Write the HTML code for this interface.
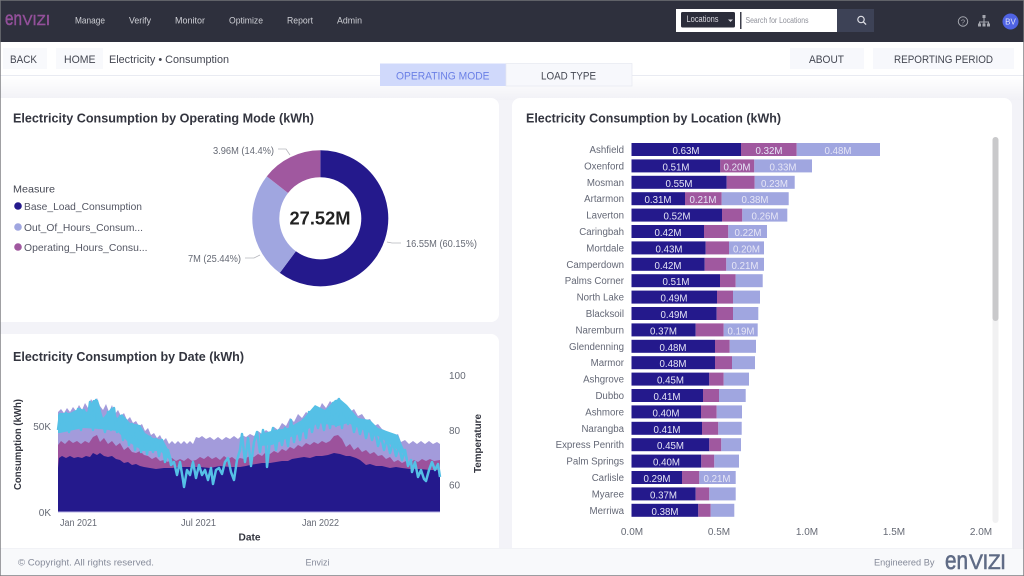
<!DOCTYPE html>
<html><head><meta charset="utf-8"><title>Envizi</title>
<style>
html,body{margin:0;padding:0;width:1024px;height:576px;overflow:hidden;background:#fff}
svg{display:block;filter:blur(.35px)}
text{font-family:"Liberation Sans",sans-serif;white-space:pre}
.nav{fill:#cfd0d6;font-size:9.5px}
.title{fill:#33353f;font-size:12.5px;font-weight:bold}
.loc{fill:#646876;font-size:9.7px;text-anchor:end}
.v{fill:#e6e6f6;font-size:9.7px;text-anchor:middle}
.ax{fill:#666a75;font-size:10px}
.btn{fill:#444752;font-size:11px}
</style></head><body>
<svg width="1024" height="576" viewBox="0 0 1024 576" xmlns="http://www.w3.org/2000/svg">
<defs><linearGradient id="g" x1="0" y1="0" x2="0" y2="1"><stop offset="0" stop-color="#fff"/><stop offset="1" stop-color="#f1f1f6"/></linearGradient></defs>
<rect width="1024" height="576" fill="#f3f3f8"/>
<rect y="76" width="1024" height="24" fill="url(#g)"/>

<!-- header -->
<rect width="1024" height="42" fill="#2e303d"/>
<text x="5" y="25" font-size="19" fill="#93509a" stroke="#93509a" stroke-width=".5" textLength="17" lengthAdjust="spacingAndGlyphs">en</text>
<text x="22.500" y="25" font-size="15" fill="#93509a" stroke="#93509a" stroke-width=".4" textLength="27.500" lengthAdjust="spacing">VIZI</text>
<text class="nav" x="75" y="23.500" textLength="30" lengthAdjust="spacingAndGlyphs">Manage</text>
<text class="nav" x="129" y="23.500" textLength="22" lengthAdjust="spacingAndGlyphs">Verify</text>
<text class="nav" x="175" y="23.500" textLength="30" lengthAdjust="spacingAndGlyphs">Monitor</text>
<text class="nav" x="229" y="23.500" textLength="34" lengthAdjust="spacingAndGlyphs">Optimize</text>
<text class="nav" x="287" y="23.500" textLength="26" lengthAdjust="spacingAndGlyphs">Report</text>
<text class="nav" x="337" y="23.500" textLength="25" lengthAdjust="spacingAndGlyphs">Admin</text>
<rect x="676" y="9" width="161" height="23" fill="#fff"/>
<rect x="681" y="12" width="54" height="15.500" rx="1.500" fill="#2b2d3a"/>
<text x="686.500" y="22" font-size="9" fill="#d8d8de" textLength="32" lengthAdjust="spacingAndGlyphs">Locations</text>
<path d="M728 19.500h5l-2.500 2.500z" fill="#d8d8de"/>
<rect x="740" y="12" width="1.500" height="17" fill="#3c3e4a"/>
<text x="745.500" y="23" font-size="8" fill="#8d8f98" textLength="63" lengthAdjust="spacingAndGlyphs">Search for Locations</text>
<rect x="837" y="9" width="37" height="23" fill="#3d4256"/>
<circle cx="861" cy="19.500" r="3.200" fill="none" stroke="#dfe0e6" stroke-width="1.200"/>
<path d="M863.400 21.900l2.700 2.700" stroke="#dfe0e6" stroke-width="1.300"/>
<circle cx="963" cy="21.500" r="4.700" fill="none" stroke="#a4a6ae" stroke-width="1"/>
<text x="963" y="24.300" font-size="7.500" fill="#a4a6ae" text-anchor="middle">?</text>
<path d="M984 16.500v4M979.500 25v-3h9v3M984 20.500v4.500" fill="none" stroke="#a4a6ae" stroke-width="1"/>
<rect x="982.500" y="15" width="3" height="3" fill="#a4a6ae"/>
<rect x="978" y="23.500" width="3" height="3" fill="#a4a6ae"/>
<rect x="982.500" y="23.500" width="3" height="3" fill="#a4a6ae"/>
<rect x="987" y="23.500" width="3" height="3" fill="#a4a6ae"/>
<circle cx="1010.500" cy="21.500" r="8" fill="#4f63e4"/>
<text x="1010.500" y="24.500" font-size="8" fill="#dfe3fa" text-anchor="middle">BV</text>

<!-- toolbar -->
<rect y="42" width="1024" height="33" fill="#fff"/>
<rect y="75" width="1024" height="1" fill="#e9ebf2"/>
<rect x="3" y="48" width="44" height="21" fill="#f8f9fc"/>
<text class="btn" x="10" y="63" textLength="27" lengthAdjust="spacingAndGlyphs">BACK</text>
<rect x="56" y="48" width="47" height="21" fill="#f8f9fc"/>
<text class="btn" x="64" y="63" textLength="31.500" lengthAdjust="spacingAndGlyphs">HOME</text>
<text x="109" y="63" font-size="11" fill="#444752" textLength="120" lengthAdjust="spacingAndGlyphs">Electricity • Consumption</text>
<rect x="790" y="48" width="74" height="21" fill="#f7f8fc"/>
<text class="btn" x="809" y="63" textLength="35" lengthAdjust="spacingAndGlyphs">ABOUT</text>
<rect x="873" y="48" width="141" height="21" fill="#f7f8fc"/>
<text class="btn" x="894" y="63" textLength="99" lengthAdjust="spacingAndGlyphs">REPORTING PERIOD</text>
<rect x="380" y="63.500" width="126" height="22.500" fill="#d0d9fb"/>
<text x="396" y="79.500" font-size="11" fill="#6b80e6" textLength="93.500" lengthAdjust="spacingAndGlyphs">OPERATING MODE</text>
<rect x="506" y="63.500" width="126" height="22.500" fill="#f7f8fc" stroke="#e6e8f0" stroke-width=".7"/>
<text x="541" y="79.500" font-size="11" fill="#444752" textLength="55" lengthAdjust="spacingAndGlyphs">LOAD TYPE</text>

<!-- cards -->
<rect x="-8" y="98" width="507" height="224" rx="8" fill="#fff"/>
<rect x="-8" y="334" width="507" height="222" rx="8" fill="#fff"/>
<rect x="512" y="98" width="500" height="458" rx="8" fill="#fff"/>

<!-- donut card -->
<text class="title" x="13" y="122.500" textLength="301" lengthAdjust="spacingAndGlyphs">Electricity Consumption by Operating Mode (kWh)</text>
<text x="13" y="192.500" font-size="10.500" fill="#444752" textLength="42" lengthAdjust="spacingAndGlyphs">Measure</text>
<circle cx="18" cy="206" r="3.800" fill="#24198c"/>
<text x="24" y="210" font-size="10.500" fill="#545764" textLength="118" lengthAdjust="spacingAndGlyphs">Base_Load_Consumption</text>
<circle cx="18" cy="227" r="3.800" fill="#a0a6e0"/>
<text x="24" y="231" font-size="10.500" fill="#545764" textLength="119" lengthAdjust="spacingAndGlyphs">Out_Of_Hours_Consum...</text>
<circle cx="18" cy="247" r="3.800" fill="#a0589f"/>
<text x="24" y="251" font-size="10.500" fill="#545764" textLength="123.500" lengthAdjust="spacingAndGlyphs">Operating_Hours_Consu...</text>
<g fill="none" stroke-width="27">
<path stroke="#24198c" d="M320.300 163.800A54.500 54.500 0 1 1 287.850 262.090"/>
<path stroke="#a0a6e0" d="M287.850 262.090A54.500 54.500 0 0 1 277.430 184.650"/>
<path stroke="#a0589f" d="M277.430 184.650A54.500 54.500 0 0 1 320.300 163.800"/>
</g>
<text x="320" y="224.500" font-size="18" font-weight="bold" fill="#222" text-anchor="middle" textLength="61" lengthAdjust="spacingAndGlyphs">27.52M</text>
<g fill="none" stroke="#b5b6bc" stroke-width=".8">
<path d="M278 149h8l4 6"/><path d="M387 242l5 1h9"/><path d="M245 258h9l6-3"/>
</g>
<text class="ax" x="213" y="154" textLength="61" lengthAdjust="spacingAndGlyphs">3.96M (14.4%)</text>
<text class="ax" x="406" y="247" textLength="71" lengthAdjust="spacingAndGlyphs">16.55M (60.15%)</text>
<text class="ax" x="188" y="262" textLength="53" lengthAdjust="spacingAndGlyphs">7M (25.44%)</text>

<!-- date chart -->
<text class="title" x="13" y="361" textLength="231" lengthAdjust="spacingAndGlyphs">Electricity Consumption by Date (kWh)</text>
<path fill="#a39bdb" d="M58 512L58 412 61 409 64 413 67 408 70 412 73 407 76 411 79 405 82 410 85 403 88 408 91 399 94 404 97 398 100 406 103 410 106 404 109 412 112 405 115 414 118 410 121 416 124 413 127 420 130 417 133 423 136 421 139 426 142 424 145 431 148 428 151 435 154 433 157 438 160 435 163 441 166 438 169 444 172 441 175 444 178 441 181 444 184 441 187 444 190 441 193 444 196 437 199 438 202 436 206 439 210 437 214 440 218 437 222 440 226 437 230 439 234 436 238 439 242 435 246 437 250 434 254 436 258 431 262 434 266 430 270 433 274 427 278 430 282 423 286 426 290 418 294 422 298 414 302 418 306 412 310 415 314 408 318 412 322 403 326 408 330 401 334 405 338 398 342 402 346 408 350 412 354 409 358 416 362 414 366 420 370 419 374 426 378 424 382 429 386 431 390 433 394 436 398 434 401 442 405 440 409 444 413 441 417 444 421 441 425 444 429 441 433 444 437 442 440 444L440 512Z"/>
<path fill="#9c529c" d="M58 512L58 445 61 441 65 444 69 440 73 443 77 441 81 444 85 441 89 443 93 437 97 435 100 442 104 438 108 444 112 441 116 446 120 443 124 450 128 447 132 452 136 453 140 451 144 455 148 456 152 459 156 457 160 461 164 460 168 462 172 458 176 461 180 459 184 461 188 458 192 461 196 460 200 457 204 459 208 456 212 459 216 457 220 460 224 456 228 459 232 457 236 460 240 458 244 459 250 456 254 457 258 454 262 456 266 452 270 454 274 451 278 453 282 449 286 451 290 447 294 449 298 445 302 447 306 443 310 445 314 442 318 444 322 441 326 443 330 441 334 436 338 435 342 439 346 447 350 444 354 450 358 447 362 452 366 450 370 454 374 452 378 456 382 455 386 459 390 457 394 462 398 460 402 463 406 461 410 463 414 460 418 462 422 459 426 461 430 459 434 461 440 460L440 512Z"/>
<path fill="#24198c" d="M58 512L58 468 59 458 62 456 66 458 70 456 74 458 78 457 82 458 86 456 90 457 93 453 97 455 100 453 104 456 108 457 112 456 116 459 120 460 124 463 128 462 132 465 136 464 140 466 144 467 150 468 156 469 164 468 172 468 180 467 190 467 200 467 210 468 220 466 230 467 240 467 246 466 250 465 256 464 262 463 270 463 276 462 282 461 288 461 292 459 298 458 304 457 310 458 316 456 322 456 328 455 334 453 340 454 346 456 350 456 356 458 360 460 366 465 370 464 376 466 382 466 390 468 396 467 402 468 410 469 420 469 430 470 440 470L440 512Z"/>
<path fill="#55c0e6" d="M58 415 60 413 70 413 80 408 87 412 93 400 98 400 103 418 112 407 117 418 122 414 130 423 140 425 145 433 153 438 163 440 170 453 173 463 160 451 143 451 127 441 117 431 100 429 83 428 60 433 58 433Z"/>
<path fill="#55c0e6" d="M260 434 275 430 288 428 302 420 315 405 325 410 335 400 340 399 347 405 358 418 370 420 378 428 398 435 402 445 408 458 398 450 378 436 365 431 348 423 338 426 318 423 302 433 288 438 272 445 260 446Z"/>
<path fill="none" stroke="#55c0e6" stroke-width="2.500" stroke-linejoin="round" d="M58 430 60 414 63 430 66 413 69 432 72 414 75 428 78 409 81 430 84 410 87 425 90 402 93 430 96 400 99 428 102 418 105 432 108 412 111 430 114 408 117 432 120 416 123 440 126 420 129 445 132 424 135 450 138 426 141 452 144 434 147 454 150 437 153 452 156 439 159 456 162 440 165 462 168 450 171 465 174 462 177 475 180 462 183 480 184 487 187 470 190 475 193 462 196 478 199 465 202 475 205 470 208 480 211 468 213 484 216 470 219 468 222 474 225 462 228 458 231 472 234 480 237 460 240 450 242 434 245 462 248 438 251 466 254 442 257 432 260 452 263 430 266 446 267 467 270 440 273 428 276 450 279 430 282 445 285 428 288 446 291 420 294 442 297 425 300 440 303 420 306 438 309 412 312 432 315 418 318 428 321 416 324 430 327 410 330 428 333 403 336 426 339 399 342 428 345 405 348 424 351 416 354 432 357 420 360 434 363 422 366 438 369 424 372 440 375 430 378 446 381 436 384 450 387 438 390 453 393 442 396 456 399 446 402 460 405 450 408 466 411 460 412 472 415 462 418 477 421 470 424 479 426 481 429 470 432 462 435 470 438 464 440 477"/>
<rect x="58" y="511.500" width="382" height="1" fill="#b9b4e4"/>
<text class="ax" x="51" y="430" text-anchor="end">50K</text>
<text class="ax" x="51" y="516" text-anchor="end">0K</text>
<text class="ax" x="449" y="379">100</text>
<text class="ax" x="449" y="434">80</text>
<text class="ax" x="449" y="488.500">60</text>
<text class="ax" x="60" y="526" textLength="37" lengthAdjust="spacingAndGlyphs">Jan 2021</text>
<text class="ax" x="181" y="526" textLength="35" lengthAdjust="spacingAndGlyphs">Jul 2021</text>
<text class="ax" x="302" y="526" textLength="37" lengthAdjust="spacingAndGlyphs">Jan 2022</text>
<text x="238.500" y="540.500" font-size="10" font-weight="bold" fill="#33353f" textLength="22" lengthAdjust="spacingAndGlyphs">Date</text>
<text transform="translate(21 490) rotate(-90)" font-size="10" font-weight="bold" fill="#33353f" textLength="91" lengthAdjust="spacingAndGlyphs">Consumption (kWh)</text>
<text transform="translate(481 473) rotate(-90)" font-size="10" font-weight="bold" fill="#33353f" textLength="59" lengthAdjust="spacingAndGlyphs">Temperature</text>

<!-- location chart -->
<text class="title" x="526" y="122.500" textLength="255" lengthAdjust="spacingAndGlyphs">Electricity Consumption by Location (kWh)</text>
<g>
<rect x="631.500" y="143" width="109.500" height="13" fill="#24198c"/><rect x="741" y="143" width="55.700" height="13" fill="#a0589f"/><rect x="796.700" y="143" width="83.300" height="13" fill="#a0a6e0"/>
<rect x="631.500" y="159.400" width="88.800" height="13" fill="#24198c"/><rect x="720.300" y="159.400" width="34" height="13" fill="#a0589f"/><rect x="754.300" y="159.400" width="57.700" height="13" fill="#a0a6e0"/>
<rect x="631.500" y="175.800" width="95.200" height="13" fill="#24198c"/><rect x="726.700" y="175.800" width="28" height="13" fill="#a0589f"/><rect x="754.700" y="175.800" width="40" height="13" fill="#a0a6e0"/>
<rect x="631.500" y="192.200" width="53.500" height="13" fill="#24198c"/><rect x="685" y="192.200" width="36.700" height="13" fill="#a0589f"/><rect x="721.700" y="192.200" width="67" height="13" fill="#a0a6e0"/>
<rect x="631.500" y="208.600" width="90.500" height="13" fill="#24198c"/><rect x="722" y="208.600" width="20.300" height="13" fill="#a0589f"/><rect x="742.300" y="208.600" width="45" height="13" fill="#a0a6e0"/>
<rect x="631.500" y="225" width="72.500" height="13" fill="#24198c"/><rect x="704" y="225" width="24.300" height="13" fill="#a0589f"/><rect x="728.300" y="225" width="38.700" height="13" fill="#a0a6e0"/>
<rect x="631.500" y="241.400" width="74.200" height="13" fill="#24198c"/><rect x="705.700" y="241.400" width="23.300" height="13" fill="#a0589f"/><rect x="729" y="241.400" width="35" height="13" fill="#a0a6e0"/>
<rect x="631.500" y="257.800" width="73.200" height="13" fill="#24198c"/><rect x="704.700" y="257.800" width="21.600" height="13" fill="#a0589f"/><rect x="726.300" y="257.800" width="37.700" height="13" fill="#a0a6e0"/>
<rect x="631.500" y="274.200" width="88.500" height="13" fill="#24198c"/><rect x="720" y="274.200" width="15.700" height="13" fill="#a0589f"/><rect x="735.700" y="274.200" width="27" height="13" fill="#a0a6e0"/>
<rect x="631.500" y="290.600" width="85.500" height="13" fill="#24198c"/><rect x="717" y="290.600" width="16" height="13" fill="#a0589f"/><rect x="733" y="290.600" width="27" height="13" fill="#a0a6e0"/>
<rect x="631.500" y="307" width="85.200" height="13" fill="#24198c"/><rect x="716.700" y="307" width="16.300" height="13" fill="#a0589f"/><rect x="733" y="307" width="25.300" height="13" fill="#a0a6e0"/>
<rect x="631.500" y="323.400" width="64.200" height="13" fill="#24198c"/><rect x="695.700" y="323.400" width="28" height="13" fill="#a0589f"/><rect x="723.700" y="323.400" width="34" height="13" fill="#a0a6e0"/>
<rect x="631.500" y="339.800" width="83.500" height="13" fill="#24198c"/><rect x="715" y="339.800" width="14.700" height="13" fill="#a0589f"/><rect x="729.700" y="339.800" width="26.300" height="13" fill="#a0a6e0"/>
<rect x="631.500" y="356.200" width="83.500" height="13" fill="#24198c"/><rect x="715" y="356.200" width="17" height="13" fill="#a0589f"/><rect x="732" y="356.200" width="23" height="13" fill="#a0a6e0"/>
<rect x="631.500" y="372.600" width="77.800" height="13" fill="#24198c"/><rect x="709.300" y="372.600" width="14.400" height="13" fill="#a0589f"/><rect x="723.700" y="372.600" width="25.300" height="13" fill="#a0a6e0"/>
<rect x="631.500" y="389" width="71.500" height="13" fill="#24198c"/><rect x="703" y="389" width="16" height="13" fill="#a0589f"/><rect x="719" y="389" width="26.700" height="13" fill="#a0a6e0"/>
<rect x="631.500" y="405.400" width="69.500" height="13" fill="#24198c"/><rect x="701" y="405.400" width="15.700" height="13" fill="#a0589f"/><rect x="716.700" y="405.400" width="25.300" height="13" fill="#a0a6e0"/>
<rect x="631.500" y="421.800" width="70.500" height="13" fill="#24198c"/><rect x="702" y="421.800" width="16.300" height="13" fill="#a0589f"/><rect x="718.300" y="421.800" width="23.400" height="13" fill="#a0a6e0"/>
<rect x="631.500" y="438.200" width="77.800" height="13" fill="#24198c"/><rect x="709.300" y="438.200" width="12" height="13" fill="#a0589f"/><rect x="721.300" y="438.200" width="19.700" height="13" fill="#a0a6e0"/>
<rect x="631.500" y="454.600" width="69.800" height="13" fill="#24198c"/><rect x="701.300" y="454.600" width="13" height="13" fill="#a0589f"/><rect x="714.300" y="454.600" width="24.700" height="13" fill="#a0a6e0"/>
<rect x="631.500" y="471" width="50.500" height="13" fill="#24198c"/><rect x="682" y="471" width="17.300" height="13" fill="#a0589f"/><rect x="699.300" y="471" width="36.400" height="13" fill="#a0a6e0"/>
<rect x="631.500" y="487.400" width="64.200" height="13" fill="#24198c"/><rect x="695.700" y="487.400" width="13.600" height="13" fill="#a0589f"/><rect x="709.300" y="487.400" width="26.400" height="13" fill="#a0a6e0"/>
<rect x="631.500" y="503.800" width="66.800" height="13" fill="#24198c"/><rect x="698.300" y="503.800" width="12.400" height="13" fill="#a0589f"/><rect x="710.700" y="503.800" width="23.600" height="13" fill="#a0a6e0"/>
</g>
<text class="loc" x="624" y="153">Ashfield</text><text class="loc" x="624" y="169.400">Oxenford</text><text class="loc" x="624" y="185.800">Mosman</text><text class="loc" x="624" y="202.200">Artarmon</text><text class="loc" x="624" y="218.600">Laverton</text><text class="loc" x="624" y="235">Caringbah</text><text class="loc" x="624" y="251.400">Mortdale</text><text class="loc" x="624" y="267.800">Camperdown</text><text class="loc" x="624" y="284.200">Palms Corner</text><text class="loc" x="624" y="300.600">North Lake</text><text class="loc" x="624" y="317">Blacksoil</text><text class="loc" x="624" y="333.400">Naremburn</text><text class="loc" x="624" y="349.800">Glendenning</text><text class="loc" x="624" y="366.200">Marmor</text><text class="loc" x="624" y="382.600">Ashgrove</text><text class="loc" x="624" y="399">Dubbo</text><text class="loc" x="624" y="415.400">Ashmore</text><text class="loc" x="624" y="431.800">Narangba</text><text class="loc" x="624" y="448.200">Express Penrith</text><text class="loc" x="624" y="464.600">Palm Springs</text><text class="loc" x="624" y="481">Carlisle</text><text class="loc" x="624" y="497.400">Myaree</text><text class="loc" x="624" y="513.800">Merriwa</text>
<g>
<text class="v" x="686" y="154">0.63M</text><text class="v" x="769" y="154">0.32M</text><text class="v" x="838" y="154">0.48M</text>
<text class="v" x="676" y="170.400">0.51M</text><text class="v" x="737" y="170.400">0.20M</text><text class="v" x="783" y="170.400">0.33M</text>
<text class="v" x="679" y="186.800">0.55M</text><text class="v" x="774.500" y="186.800">0.23M</text>
<text class="v" x="658" y="203.200">0.31M</text><text class="v" x="703" y="203.200">0.21M</text><text class="v" x="755" y="203.200">0.38M</text>
<text class="v" x="677" y="219.600">0.52M</text><text class="v" x="765" y="219.600">0.26M</text>
<text class="v" x="668" y="236">0.42M</text><text class="v" x="748" y="236">0.22M</text>
<text class="v" x="669" y="252.400">0.43M</text><text class="v" x="746.500" y="252.400">0.20M</text>
<text class="v" x="668" y="268.800">0.42M</text><text class="v" x="745" y="268.800">0.21M</text>
<text class="v" x="676" y="285.200">0.51M</text>
<text class="v" x="674" y="301.600">0.49M</text>
<text class="v" x="674" y="318">0.49M</text>
<text class="v" x="663.500" y="334.400">0.37M</text><text class="v" x="741" y="334.400">0.19M</text>
<text class="v" x="673" y="350.800">0.48M</text>
<text class="v" x="673" y="367.200">0.48M</text>
<text class="v" x="670.500" y="383.600">0.45M</text>
<text class="v" x="667" y="400">0.41M</text>
<text class="v" x="666" y="416.400">0.40M</text>
<text class="v" x="667" y="432.800">0.41M</text>
<text class="v" x="670.500" y="449.200">0.45M</text>
<text class="v" x="666.500" y="465.600">0.40M</text>
<text class="v" x="657" y="482">0.29M</text><text class="v" x="717" y="482">0.21M</text>
<text class="v" x="663.500" y="498.400">0.37M</text>
<text class="v" x="665" y="514.800">0.38M</text>
</g>
<text class="ax" x="632" y="535" text-anchor="middle">0.0M</text>
<text class="ax" x="719" y="535" text-anchor="middle">0.5M</text>
<text class="ax" x="807" y="535" text-anchor="middle">1.0M</text>
<text class="ax" x="894" y="535" text-anchor="middle">1.5M</text>
<text class="ax" x="981" y="535" text-anchor="middle">2.0M</text>
<rect x="992.500" y="137" width="6" height="386" rx="3" fill="#f1f1f2"/>
<rect x="992.500" y="137" width="6" height="184" rx="3" fill="#c9c9cb"/>

<!-- footer -->
<rect y="548" width="1024" height="27" fill="#f8f9fb"/>
<rect y="548" width="1024" height=".7" fill="#eeeff4"/>
<text x="18" y="565.500" font-size="9.500" fill="#858a99" textLength="136" lengthAdjust="spacingAndGlyphs">© Copyright. All rights reserved.</text>
<text x="305.500" y="565.500" font-size="9.500" fill="#858a99" textLength="24" lengthAdjust="spacingAndGlyphs">Envizi</text>
<text x="874" y="565.500" font-size="9.500" fill="#858a99" textLength="60.500" lengthAdjust="spacingAndGlyphs">Engineered By</text>
<text x="945" y="569" font-size="26" fill="#5f6b85" stroke="#5f6b85" stroke-width=".6" textLength="23" lengthAdjust="spacingAndGlyphs">en</text>
<text x="969" y="569" font-size="21" fill="#5f6b85" stroke="#5f6b85" stroke-width=".5" textLength="37" lengthAdjust="spacing">VIZI</text>

<!-- screen edge -->
<rect x="0" y="0" width="1024" height="576" fill="none" stroke="#77787c" stroke-width="1.400"/>
</svg>
</body></html>
